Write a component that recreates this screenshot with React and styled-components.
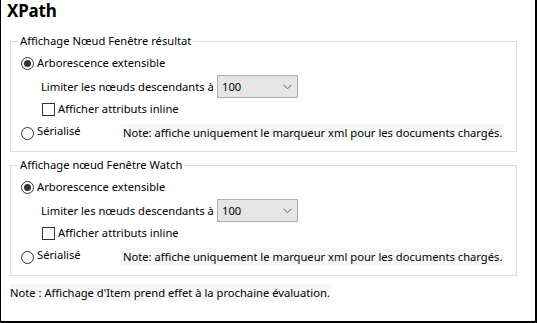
import React from 'react';
import styled, { createGlobalStyle } from 'styled-components';

const GlobalStyle = createGlobalStyle`
  html, body {
    margin: 0;
    padding: 0;
    background: #ffffff;
  }
  body {
    font-family: 'Noto Sans', 'Open Sans', sans-serif;
    font-size: 11.2px;
    color: #000000;
  }
`;

const Frame = styled.div`
  box-sizing: border-box;
  width: 537px;
  height: 323px;
  border-left: 1px solid #000;
  border-right: 2px solid #000;
  border-bottom: 2px solid #000;
  background: #fff;
  padding-left: 9px;
  display: flex;
  flex-direction: column;
`;

const Title = styled.h1`
  margin: 0 0 11px -3px;
  font-size: 17px;
  line-height: 22px;
  font-weight: 700;
  letter-spacing: -0.2px;
`;

const Group = styled.fieldset`
  margin: ${(p) => (p.$first ? '0' : '5px 0 0 0')};
  padding: 0 0 9px 10px;
  width: 507px;
  box-sizing: border-box;
  border: 1px solid #dcdcdc;
  min-inline-size: 0;
`;

const Legend = styled.legend`
  margin-left: -3px;
  padding: 0 2px;
  line-height: 16px;
`;

const Row = styled.div`
  display: flex;
  align-items: center;
  height: ${(p) => p.$h || 20}px;
  margin-top: ${(p) => p.$mt || 0}px;
  padding-left: ${(p) => p.$indent || 0}px;
  line-height: 16px;
`;

const RadioCircle = styled.span`
  box-sizing: border-box;
  width: 13px;
  height: 13px;
  border-radius: 50%;
  border: 1px solid #333;
  display: flex;
  align-items: center;
  justify-content: center;
  flex: none;
  margin-top: ${(p) => (p.$raise ? '2px' : '0')};

  &::after {
    content: '';
    display: ${(p) => (p.$checked ? 'block' : 'none')};
    width: 7px;
    height: 7px;
    border-radius: 50%;
    background: #333;
  }
`;

const RadioLabel = styled.span`
  margin-left: 3px;
  margin-top: ${(p) => (p.$raise ? '-3px' : '0')};
`;

const LabelCell = styled.div`
  display: flex;
  align-items: center;
  width: 100px;
  flex: none;
`;

const NoteText = styled.span`
  background: #f7f7f7;
  padding: 0 2px;
  line-height: 17px;
`;

const LimitLabel = styled.span`
  width: 176px;
  flex: none;
`;

const Select = styled.div`
  box-sizing: border-box;
  width: 81px;
  height: 23px;
  border: 1px solid #adadad;
  background: #e5e5e5;
  display: flex;
  align-items: center;
  justify-content: space-between;
  padding: 0 5px 0 4px;
`;

const CheckBox = styled.span`
  box-sizing: border-box;
  width: 13px;
  height: 13px;
  border: 1px solid #333;
  background: #fff;
  flex: none;
`;

const CheckLabel = styled.span`
  margin-left: 3px;
`;

const BottomNote = styled.div`
  margin-top: 8px;
  line-height: 17px;
  align-self: flex-start;
  background: #f7f7f7;
  padding-right: 1px;
`;

const Chevron = () => (
  <svg width="9" height="6" viewBox="0 0 9 6">
    <path d="M0.5 0.8 L4.5 4.8 L8.5 0.8" fill="none" stroke="#5a5a5a" strokeWidth="1" />
  </svg>
);

const DisplayGroup = ({ legend, first }) => (
  <Group $first={first}>
    <Legend>{legend}</Legend>
    <Row $mt={4}>
      <RadioCircle $checked />
      <RadioLabel>Arborescence extensible</RadioLabel>
    </Row>
    <Row $mt={2} $h={23} $indent={20}>
      <LimitLabel>Limiter les nœuds descendants à</LimitLabel>
      <Select>
        <span>100</span>
        <Chevron />
      </Select>
    </Row>
    <Row $mt={1} $indent={21}>
      <CheckBox />
      <CheckLabel>Afficher attributs inline</CheckLabel>
    </Row>
    <Row $mt={3}>
      <LabelCell>
        <RadioCircle $raise />
        <RadioLabel $raise>Sérialisé</RadioLabel>
      </LabelCell>
      <NoteText>Note: affiche uniquement le marqueur xml pour les documents chargés.</NoteText>
    </Row>
  </Group>
);

const App = () => (
  <>
    <GlobalStyle />
    <Frame>
      <Title>XPath</Title>
      <DisplayGroup first legend="Affichage Nœud Fenêtre résultat" />
      <DisplayGroup legend="Affichage nœud Fenêtre Watch" />
      <BottomNote>Note : Affichage d'Item prend effet à la prochaine évaluation.</BottomNote>
    </Frame>
  </>
);

export default App;
